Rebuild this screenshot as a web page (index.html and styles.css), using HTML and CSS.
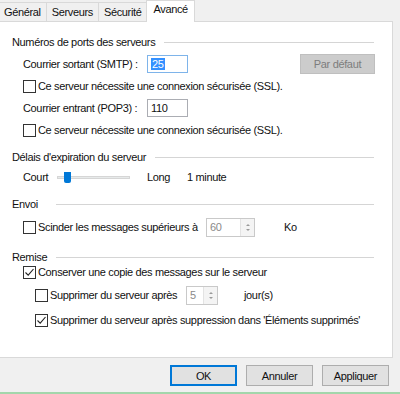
FILE: index.html
```html
<!DOCTYPE html>
<html lang="fr">
<head>
    <meta charset="UTF-8">
    <title>Paramètres de messagerie</title>
    <link rel="stylesheet" href="styles.css">
</head>
<body>
    <div class="tabs">
        <div class="tab">Général</div>
        <div class="tab">Serveurs</div>
        <div class="tab">Sécurité</div>
        <div class="tab active">Avancé</div>
    </div>

    <div class="panel">
        <!-- ports -->
        <div class="group">
            <div class="head"><span>Numéros de ports des serveurs</span><i class="rule"></i></div>
            <div class="row field">
                <span class="lbl">Courrier sortant (SMTP) :</span>
                <div class="input focus"><span class="sel">25</span></div>
                <button class="btn off">Par défaut</button>
            </div>
            <div class="row">
                <span class="cb"></span>
                <span>Ce serveur nécessite une connexion sécurisée (SSL).</span>
            </div>
            <div class="row field">
                <span class="lbl">Courrier entrant (POP3) :</span>
                <div class="input">110</div>
            </div>
            <div class="row">
                <span class="cb"></span>
                <span>Ce serveur nécessite une connexion sécurisée (SSL).</span>
            </div>
        </div>

        <!-- délais -->
        <div class="group">
            <div class="head"><span>Délais d'expiration du serveur</span><i class="rule"></i></div>
            <div class="row">
                <span class="court">Court</span>
                <div class="track"><span class="thumb"></span></div>
                <span class="long">Long</span>
                <span>1 minute</span>
            </div>
        </div>

        <!-- envoi -->
        <div class="group">
            <div class="head"><span>Envoi</span><i class="rule wide"></i></div>
            <div class="row spinrow">
                <span class="cb"></span>
                <span class="split-lbl">Scinder les messages supérieurs à</span>
                <div class="spin">
                    <span class="val">60</span>
                    <span class="arrows"><i class="up"></i><i class="down"></i></span>
                </div>
                <span class="unit">Ko</span>
            </div>
        </div>

        <!-- remise -->
        <div class="group">
            <div class="head"><span>Remise</span><i class="rule"></i></div>
            <div class="row tight">
                <span class="cb checked">
                    <svg width="11" height="11" viewBox="0 0 11 11"><path d="M1.5 5.5 L4.2 8.2 L9.5 2" fill="none" stroke="#222" stroke-width="1.1"/></svg>
                </span>
                <span>Conserver une copie des messages sur le serveur</span>
            </div>
            <div class="row sub spinrow">
                <span class="cb"></span>
                <span class="days-lbl">Supprimer du serveur après</span>
                <div class="spin small">
                    <span class="val">5</span>
                    <span class="arrows"><i class="up"></i><i class="down"></i></span>
                </div>
                <span class="unit days">jour(s)</span>
            </div>
            <div class="row sub last">
                <span class="cb checked">
                    <svg width="11" height="11" viewBox="0 0 11 11"><path d="M1.5 5.5 L4.2 8.2 L9.5 2" fill="none" stroke="#222" stroke-width="1.1"/></svg>
                </span>
                <span>Supprimer du serveur après suppression dans 'Éléments supprimés'</span>
            </div>
        </div>
    </div>

    <div class="actions">
        <button class="btn main">OK</button>
        <button class="btn">Annuler</button>
        <button class="btn">Appliquer</button>
    </div>
    <div class="taskbar"></div>
</body>
</html>
```

FILE: styles.css
```css
body{
    margin: 0;
    width: 400px;
    height: 394px;
    overflow: hidden;
    background: #f0f0f0;
    font-family: "Liberation Sans", Arial, sans-serif;
    font-size: 11px;
    letter-spacing: -0.35px;
    color: #111;
}

/* onglets */
.tabs{
    display: flex;
    align-items: flex-end;
    height: 21px;
    margin-left: -2px;
}
.tab{
    height: 18px;
    line-height: 18px;
    padding: 0 5px;
    margin-right: -1px;
    border: 1px solid #d9d9d9;
    border-bottom: none;
    background: #f0f0f0;
}
.tab.active{
    height: 21px;
    line-height: 17px;
    padding: 0 6px;
    margin-bottom: -1px;
    background: #fff;
    position: relative;
    z-index: 1;
}

.panel{
    width: 393px;
    height: 337px;
    box-sizing: border-box;
    padding: 13px 18px 0 12px;
    background: #fff;
    border: 1px solid #d9d9d9;
    border-left: none;
}

.group + .group{
    margin-top: 13px;
}
.head{
    display: flex;
    align-items: center;
    height: 14px;
}
.rule{
    flex: 1;
    margin-left: 9px;
    border-top: 1px solid #d5d5d5;
}
.rule.wide{
    margin-left: 18px;
}

.row{
    display: flex;
    align-items: center;
    height: 14px;
    margin-top: 6px;
    margin-left: 11px;
    white-space: nowrap;
}
.row > *{
    flex: none;
}
.row.sub{
    margin-left: 23px;
}
.row.tight{
    margin-top: 1px;
}
.row.last{
    margin-top: 8px;
}
.row.field{
    height: 18px;
}
.row.spinrow{
    height: 20px;
}

.lbl{
    width: 124px;
}
.input{
    width: 41px;
    height: 18px;
    box-sizing: border-box;
    padding: 1px 0 0 3px;
    border: 1px solid #abadb3;
    line-height: 14px;
}
.input.focus{
    border-color: #7eb4ea;
}
.sel{
    background: #3390ff;
    color: #fff;
    padding: 0 1px;
}

.cb{
    width: 13px;
    height: 13px;
    box-sizing: border-box;
    margin-right: 2px;
    border: 1px solid #333;
    background: #fff;
}
.cb svg{
    display: block;
}

.btn{
    height: 21px;
    width: 67px;
    padding: 0;
    font: inherit;
    letter-spacing: inherit;
    color: #111;
    background: #e1e1e1;
    border: 1px solid #adadad;
}
.row > .btn.off{
    width: 75px;
    height: 20px;
    margin-left: auto;
    margin-right: -1px;
    color: #7d7d7d;
    background: #cccccc;
    border-color: #bfbfbf;
}
.btn.main{
    border: 2px solid #0078d7;
}

/* curseur */
.court{
    width: 34px;
}
.track{
    width: 73px;
    height: 3px;
    position: relative;
    background: #e7eaea;
    border: 1px solid #d6d6d6;
    box-sizing: border-box;
}
.thumb{
    position: absolute;
    left: 6px;
    top: -5px;
    width: 7px;
    height: 11px;
    background: #0078d7;
    border-radius: 0 0 2px 2px;
}
.long{
    width: 40px;
    margin-left: 17px;
}

/* zones numériques */
.split-lbl{
    width: 168px;
}
.days-lbl{
    width: 136px;
}
.spin{
    display: flex;
    width: 49px;
    height: 19px;
    box-sizing: border-box;
    border: 1px solid #c9c9c9;
    color: #8a8a8a;
}
.spin.small{
    width: 32px;
}
.val{
    flex: 1;
    padding: 1px 0 0 3px;
    line-height: 15px;
}
.arrows{
    width: 13px;
    display: flex;
    flex-direction: column;
    justify-content: center;
    gap: 3px;
    align-items: center;
    border-left: 1px solid #e3e3e3;
    background: #f4f4f4;
}
.arrows i{
    width: 0;
    height: 0;
    border-left: 2px solid transparent;
    border-right: 2px solid transparent;
}
.arrows .up{
    border-bottom: 2px solid #9a9a9a;
}
.arrows .down{
    border-top: 2px solid #9a9a9a;
}
.unit{
    margin-left: 29px;
}
.unit.days{
    margin-left: 26px;
}

.actions{
    display: flex;
    justify-content: flex-end;
    gap: 9px;
    padding: 7px 11px 0 0;
}
.taskbar{
    height: 3px;
    margin-top: 6px;
    background: #a3d6ab;
}
```
